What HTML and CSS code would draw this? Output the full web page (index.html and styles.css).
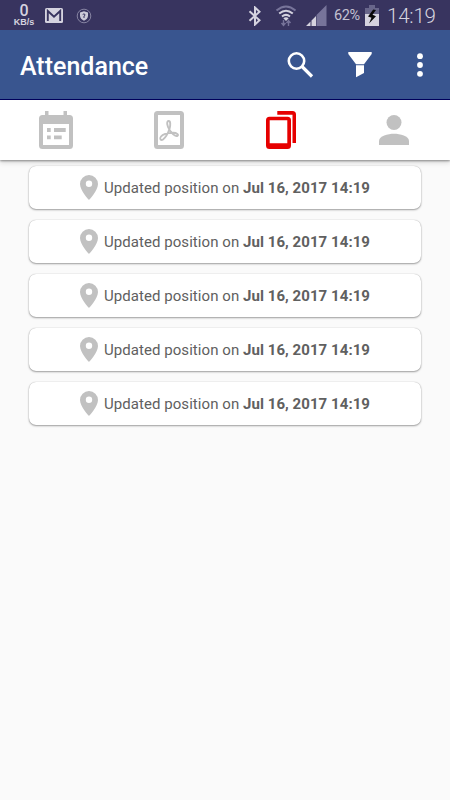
FILE: index.html
```html
<!DOCTYPE html>
<html lang="en">
<head>
    <meta charset="UTF-8">
    <meta name="viewport" content="width=device-width, initial-scale=1.0">
    <title>Attendance</title>
    <link rel="stylesheet" href="styles.css">
</head>
<body>
    <div class="status-bar">
        <div class="speed"><b>0</b><span>KB/s</span></div>
        <svg class="mail" width="18" height="15" viewBox="0 0 18 15">
            <rect width="18" height="15" rx="1.5" fill="#d5d3df"/>
            <path d="M2.8 13V3L9 8.6 15.2 3v10" fill="none" stroke="#38345f" stroke-width="1.9"/>
        </svg>
        <svg class="shield" width="16" height="16" viewBox="0 0 16 16">
            <circle cx="8" cy="8" r="6.8" fill="none" stroke="#9997b2" stroke-width="0.8"/>
            <path d="M8 3.3l4 1.2v3.3c0 2.3-1.6 4-4 5-2.4-1-4-2.7-4-5V4.500z" fill="#cccad8"/>
            <path d="M6.700 6.500q1.300-1.200 2.300 0 .4 1-1 1.500v2" fill="none" stroke="#38345f"/>
        </svg>
        <div class="status-right">
            <svg class="bluetooth" width="14" height="20" viewBox="0 0 14 20">
                <path d="M1.500 5.200l10 9L7 18.500V1.500l4.500 4.300-10 9" fill="none" stroke="#d5d3df" stroke-width="2"/>
            </svg>
            <svg class="wifi" width="22" height="22" viewBox="0 0 22 22">
                <g fill="none" stroke-width="2">
                    <path d="M1.500 5.500q9.500-8 19 0" stroke="#77749a"/>
                    <path d="M4.200 8.500q6.800-5.600 13.600 0M7 11.500q4-3.200 8 0" stroke="#d5d3df"/>
                </g>
                <path d="M8.300 13.200q2.700-2 5.400 0L11 16z" fill="#d5d3df"/>
                <path d="M8.500 15v5M6.500 18l2 2.500 2-2.500M13.500 21v-5M11.500 18l2-2.500 2 2.500" fill="none" stroke="#77749a" stroke-width="1.400"/>
            </svg>
            <svg class="signal" width="21" height="21" viewBox="0 0 21 21">
                <path d="M20.500 0v21H10.500V10z" fill="#77749a"/>
                <path d="M0 21l4.500-4.500V21zM5.500 21v-5.500L10 11v10z" fill="#d5d3df"/>
            </svg>
            <span class="percent">62%</span>
            <svg class="battery" width="14" height="21" viewBox="0 0 14 21">
                <path d="M4 0h6v3h4v6H0V3h4z" fill="#68668a"/>
                <path d="M0 9h14v12H0z" fill="#d5d3df"/>
                <path d="M8.200 4.500L3 11.500l3.500 1.300L4 18.500l7-7.300-3.500-1.400L11 5z" fill="#080808"/>
            </svg>
            <span class="clock">14:19</span>
        </div>
    </div>

    <div class="app-bar">
        <h1>Attendance</h1>
        <svg class="search" width="28" height="28" viewBox="0 0 28 28" fill="none" stroke="#fff">
            <circle cx="9.500" cy="10" r="7.700" stroke-width="2.600"/>
            <path d="M15 15.500l10 10" stroke-width="3.200"/>
        </svg>
        <svg class="filter" width="24" height="27" viewBox="0 0 24 27" fill="#fff">
            <path d="M0.300 1h23.400v2L16 13.300H8L0.300 3z"/>
            <path d="M8 14.300h8v7.800L8 26.200z"/>
        </svg>
        <svg class="more" width="6" height="24" viewBox="0 0 6 24" fill="#fff">
            <circle cx="3" cy="3.200" r="2.900"/>
            <circle cx="3" cy="12" r="2.900"/>
            <circle cx="3" cy="20.800" r="2.900"/>
        </svg>
    </div>

    <div class="tabs">
        <div class="tab">
            <svg width="34" height="38" viewBox="0 0 34 38">
                <path fill-rule="evenodd" d="M6 0h3.500v4h15V0H28v4h2.500Q34 4 34 7.500v27Q34 38 30.500 38h-27Q0 38 0 34.500v-27Q0 4 3.500 4H6zM4 13v21h26V13z"/>
                <path d="M8 17h3.700v4H8zM15 17h11.700v4H15zM8 24.500h3.700v3.700H8zM15 24.500h7.700v3.700H15z"/>
            </svg>
        </div>
        <div class="tab">
            <svg width="30" height="38" viewBox="0 0 30 38">
                <path fill-rule="evenodd" d="M3.500 0h23Q30 0 30 3.500v31Q30 38 26.500 38h-23Q0 38 0 34.500v-31Q0 0 3.500 0zM4 4v30h22V4z"/>
                <path d="M14.800 10c-2.700 0-1.700 5.500.8 9 2 3 5.500 6.500 7.700 6 2-1-.5-3.500-4.500-3.300-4.500.2-9.800 1.300-11.800 3.800-2 2.500 0 4.500 2 3 2.500-2 5.300-7 6.600-11 1-3.500.9-7.500-.8-7.500z" fill="none" stroke="#c1c1c1" stroke-width="1.900"/>
            </svg>
        </div>
        <div class="tab active">
            <svg width="30" height="38" viewBox="0 0 30 38">
                <path d="M11.300 0H26.500Q30 0 30 3.500V32h-3.500V3.700H11.300z"/>
                <path fill-rule="evenodd" d="M3.500 5.700h18Q25 5.700 25 9.200v25.300Q25 38 21.500 38h-18Q0 38 0 34.500V9.200Q0 5.700 3.500 5.700zM3.700 9.200v23h17.600v-23z"/>
            </svg>
        </div>
        <div class="tab">
            <svg width="30" height="30" viewBox="0 0 30 30">
                <circle cx="15" cy="7.500" r="7.500"/>
                <path d="M0 30v-4c0-5 9-7.300 15-7.300S30 21 30 26v4z"/>
            </svg>
        </div>
    </div>

    <div class="list">
        <div class="card">
            <svg class="pin" width="18" height="25" viewBox="0 0 18 25"><path fill-rule="evenodd" d="M9 0a9 9 0 0 0-9 9c0 6.500 9 16 9 16s9-9.500 9-16a9 9 0 0 0-9-9zm0 12a3.200 3.200 0 1 1 0-6.400 3.200 3.200 0 0 1 0 6.400z"/></svg>
            <p>Updated position on <b>Jul 16, 2017 14:19</b></p>
        </div>
        <div class="card">
            <svg class="pin" width="18" height="25" viewBox="0 0 18 25"><path fill-rule="evenodd" d="M9 0a9 9 0 0 0-9 9c0 6.500 9 16 9 16s9-9.500 9-16a9 9 0 0 0-9-9zm0 12a3.200 3.200 0 1 1 0-6.400 3.200 3.200 0 0 1 0 6.400z"/></svg>
            <p>Updated position on <b>Jul 16, 2017 14:19</b></p>
        </div>
        <div class="card">
            <svg class="pin" width="18" height="25" viewBox="0 0 18 25"><path fill-rule="evenodd" d="M9 0a9 9 0 0 0-9 9c0 6.500 9 16 9 16s9-9.500 9-16a9 9 0 0 0-9-9zm0 12a3.200 3.200 0 1 1 0-6.400 3.200 3.200 0 0 1 0 6.400z"/></svg>
            <p>Updated position on <b>Jul 16, 2017 14:19</b></p>
        </div>
        <div class="card">
            <svg class="pin" width="18" height="25" viewBox="0 0 18 25"><path fill-rule="evenodd" d="M9 0a9 9 0 0 0-9 9c0 6.500 9 16 9 16s9-9.500 9-16a9 9 0 0 0-9-9zm0 12a3.200 3.200 0 1 1 0-6.400 3.200 3.200 0 0 1 0 6.400z"/></svg>
            <p>Updated position on <b>Jul 16, 2017 14:19</b></p>
        </div>
        <div class="card">
            <svg class="pin" width="18" height="25" viewBox="0 0 18 25"><path fill-rule="evenodd" d="M9 0a9 9 0 0 0-9 9c0 6.500 9 16 9 16s9-9.500 9-16a9 9 0 0 0-9-9zm0 12a3.200 3.200 0 1 1 0-6.400 3.200 3.200 0 0 1 0 6.400z"/></svg>
            <p>Updated position on <b>Jul 16, 2017 14:19</b></p>
        </div>
    </div>
</body>
</html>
```
FILE: styles.css
```css
* {
    box-sizing: border-box;
}
body {
    font-family: Roboto, sans-serif;
    background-color: #fafafa;
    margin: 0;
    padding: 0;
    height: 800px;
    overflow: hidden;
}
svg {
    display: block;
    flex: none;
}
.status-bar {
    display: flex;
    align-items: center;
    height: 30px;
    padding: 1px 14px 0 13px;
    background-color: #38345f;
    color: #d5d3df;
}
.speed {
    display: flex;
    flex-direction: column;
    align-items: center;
    width: 22px;
    font-weight: bold;
}
.speed b {
    font-size: 16px;
    font-weight: 500;
    line-height: 14px;
}
.speed span {
    font-family: "Liberation Sans", sans-serif;
    font-size: 9px;
    line-height: 9px;
}
.mail {
    margin-left: 10px;
}
.shield {
    margin-left: 13px;
}
.status-right {
    display: flex;
    align-items: center;
    margin-left: auto;
}
.wifi {
    margin-left: 13px;
}
.signal {
    margin-left: 9px;
}
.percent {
    width: 28px;
    margin-left: 7px;
    font-size: 14.500px;
    letter-spacing: -0.4px;
    color: #c4c2d2;
}
.battery {
    margin-left: 3px;
}
.clock {
    width: 49px;
    margin-left: 8px;
    font-size: 20.500px;
    font-weight: 300;
    line-height: 28px;
    letter-spacing: -0.2px;
}

/* Title bar */
.app-bar {
    display: flex;
    align-items: center;
    height: 70px;
    padding: 0 27px 0 20px;
    background-color: #39558f;
    border-bottom: 1px solid #00005f;
    color: #fff;
}
h1 {
    flex: 1;
    margin: 3px 0 0;
    font-size: 25px;
    font-weight: 500;
}
.filter {
    margin-left: 33px;
}
.more {
    margin-left: 45px;
}

.tabs {
    position: relative;
    display: flex;
    height: 60px;
    background-color: #fff;
    box-shadow: 0 1px 2px rgba(0, 0, 0, 0.4), 0 3px 5px rgba(0, 0, 0, 0.12);
}
.tab {
    flex: 1;
    display: flex;
    align-items: center;
    justify-content: center;
    fill: #c1c1c1;
}
.tab.active {
    fill: #e60000;
}

/* Position updates */
.list {
    display: flex;
    flex-direction: column;
    gap: 11px;
    padding: 6px 29px;
}
.card {
    display: flex;
    align-items: center;
    justify-content: center;
    gap: 6px;
    height: 43px;
    background-color: #fff;
    border-radius: 7px;
    box-shadow: 0 1px 2px rgba(0, 0, 0, 0.36), 0 0 1px rgba(0, 0, 0, 0.3);
}
.pin {
    fill: #c1c1c1;
}
.card p {
    margin: 0;
    font-size: 15px;
    letter-spacing: 0.06px;
    color: #606060;
    white-space: nowrap;
}
```
